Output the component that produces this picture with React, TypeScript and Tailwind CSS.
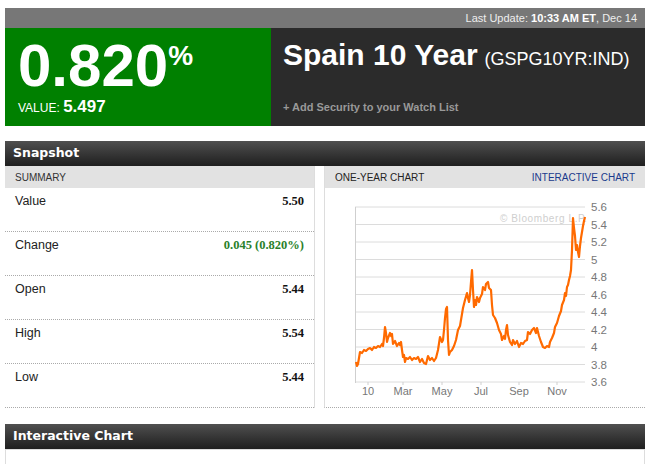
import React from "react";

const rows = [
  { label: "Value", value: "5.50", green: false },
  { label: "Change", value: "0.045 (0.820%)", green: true },
  { label: "Open", value: "5.44", green: false },
  { label: "High", value: "5.54", green: false },
  { label: "Low", value: "5.44", green: false },
];

// page-coordinate points traced from the chart
const pts: [number, number][] = [
  [356, 362], [357, 366], [358, 364], [359, 358], [360, 352], [362, 353], [364, 350], [366, 351],
  [368, 349], [370, 348], [372, 350], [374, 347], [376, 348], [378, 346], [380, 347], [382, 344],
  [383, 346], [384, 338], [385, 327], [386, 333], [387, 342], [388, 338], [390, 333], [391, 336],
  [392, 334], [393, 344], [395, 341], [397, 346], [399, 343], [400, 345], [401, 342], [402, 350],
  [403, 357], [404, 355], [405, 362], [406, 358], [408, 359], [410, 357], [412, 360], [414, 358],
  [416, 359], [418, 357], [420, 362], [422, 359], [424, 363], [426, 364], [427, 360], [428, 356],
  [430, 360], [432, 358], [434, 361], [436, 358], [438, 350], [440, 337], [442, 342], [443, 340],
  [444, 330], [445, 318], [446, 309], [447, 307], [448, 340], [449, 355], [450, 352], [452, 350],
  [454, 346], [456, 340], [458, 330], [460, 326], [462, 314], [463, 308], [465, 300], [467, 293],
  [468, 298], [469, 302], [470, 295], [471, 282], [472, 270], [473, 290], [474, 307], [475, 300],
  [476, 305], [477, 297], [479, 302], [480, 298], [482, 294], [483, 287], [485, 290], [486, 284],
  [488, 282], [489, 288], [491, 290], [492, 305], [493, 315], [495, 318], [497, 323], [499, 330],
  [501, 334], [502, 340], [504, 336], [505, 339], [506, 330], [507, 325], [508, 335], [510, 342],
  [512, 345], [513, 340], [515, 344], [517, 341], [519, 347], [521, 343], [523, 344], [525, 341],
  [527, 340], [528, 332], [530, 334], [532, 330], [534, 328], [536, 333], [537, 328], [539, 336],
  [541, 342], [543, 347], [545, 348], [547, 346], [549, 347], [550, 342], [552, 338], [554, 333],
  [555, 327], [557, 323], [559, 316], [561, 311], [562, 305], [564, 300], [565, 293], [566, 296],
  [567, 287], [568, 285], [569, 280], [570, 276], [571, 270], [572, 250], [573, 218], [574, 228],
  [575, 236], [576, 250], [577, 245], [578, 252], [579, 257], [580, 246], [581, 238], [582, 232],
  [583, 226], [584, 221], [585, 217],
];

const yLabels = ["5.6", "5.4", "5.2", "5", "4.8", "4.6", "4.4", "4.2", "4", "3.8", "3.6"];
const xLabels: [string, number][] = [
  ["10", 368],
  ["Mar", 403],
  ["May", 442],
  ["Jul", 481],
  ["Sep", 519],
  ["Nov", 557],
];

function YearChart() {
  return (
    <svg width="320" height="218" viewBox="325 188 320 218" className="block">
      {yLabels.map((l, i) => (
        <g key={l}>
          <line x1={355} x2={585} y1={207 + i * 17.5} y2={207 + i * 17.5} stroke="#dcdcdc" strokeWidth="1" />
          <text x={591} y={211 + i * 17.5} fontSize="11.5" fill="#777" fontFamily="'Liberation Sans', Arial, sans-serif">
            {l}
          </text>
        </g>
      ))}
      <line x1={355.5} x2={355.5} y1={207} y2={383} stroke="#cfcfcf" />
      {xLabels.map(([l, x]) => (
        <g key={l}>
          <line x1={x} x2={x} y1={382} y2={385} stroke="#cfcfcf" />
          <text x={x} y={395} fontSize="11" fill="#777" textAnchor="middle" fontFamily="'Liberation Sans', Arial, sans-serif">
            {l}
          </text>
        </g>
      ))}
      <text x={500} y={222} fontSize="10" fill="#cfcfcf" letterSpacing="0.6" fontFamily="'Liberation Sans', Arial, sans-serif">
        © Bloomberg L.P.
      </text>
      <polyline
        points={pts.map(([x, y]) => `${x},${y}`).join(" ")}
        fill="none"
        stroke="#ff6a00"
        strokeWidth="2.2"
        strokeLinejoin="round"
      />
    </svg>
  );
}

function SectionHeader({ title }: { title: string }) {
  return (
    <div className="flex h-[25px] items-center bg-gradient-to-b from-[#505050] to-[#1f1f1f] pl-[8px] text-[12.5px] font-bold text-white [font-family:'DejaVu_Sans',Verdana,sans-serif]">
      {title}
    </div>
  );
}

export default function App() {
  return (
    <div className="h-[464px] w-[655px] overflow-hidden bg-white pl-[5px] pt-[8px] [font-family:'Liberation_Sans',Arial,sans-serif]">
      <div className="w-[640px]">
        <div className="flex h-[20px] items-center justify-end bg-[#777] pr-[8px] text-[11px] text-[#eee]">
          Last Update:&nbsp;<b className="text-white">10:33 AM ET</b>, Dec 14
        </div>
        <div className="flex h-[98px]">
          <div className="w-[266px] bg-[#008000] pl-[13px] text-white">
            <div className="flex items-start pt-[10px]">
              <span className="text-[60px] font-bold leading-[56px]">0.820</span>
              <span className="mt-[2px] text-[28px] font-bold leading-[32px]">%</span>
            </div>
            <div className="mt-[3px] flex items-baseline leading-[20px]">
              <span className="text-[12px]">VALUE:&nbsp;</span>
              <span className="text-[17px] font-bold">5.497</span>
            </div>
          </div>
          <div className="flex-1 bg-[#2b2b2b] pl-[12px] text-white">
            <div className="flex items-baseline pt-[8px]">
              <span className="text-[30px] font-bold leading-[38px]">Spain 10 Year</span>
              <span className="ml-[7px] text-[18px]">(GSPG10YR:IND)</span>
            </div>
            <div className="mt-[25px] text-[11px] font-bold text-[#999]">+ Add Security to your Watch List</div>
          </div>
        </div>

        <div className="mt-[15px]">
          <SectionHeader title="Snapshot" />
          <div className="flex">
            <div className="w-[311px] border-r border-[#ddd]">
              <div className="flex h-[22px] items-center bg-[#e2e2e2] pl-[10px] text-[10px] text-[#333]">SUMMARY</div>
              {rows.map((r) => (
                <div
                  key={r.label}
                  className="flex h-[44px] justify-between border-b border-dotted border-[#aaa] pl-[10px] pr-[10px] pt-[4px]"
                >
                  <span className="text-[12.5px] text-[#222]">{r.label}</span>
                  <span
                    className={`text-[12.5px] font-bold [font-family:'Liberation_Serif','Times_New_Roman',serif] ${
                      r.green ? "text-[#2a7f2a]" : "text-[#111]"
                    }`}
                  >
                    {r.value}
                  </span>
                </div>
              ))}
            </div>
            <div className="ml-[9px] flex-1 border-b border-l border-dotted border-[#aaa] [border-left-color:#ddd] [border-left-style:solid]">
              <div className="flex h-[22px] items-center justify-between bg-[#e2e2e2] px-[10px] text-[10px]">
                <span className="text-[#222]">ONE-YEAR CHART</span>
                <span className="text-[#1a3a8c]">INTERACTIVE CHART</span>
              </div>
              <YearChart />
            </div>
          </div>
        </div>

        <div className="mt-[16px]">
          <SectionHeader title="Interactive Chart" />
          <div className="h-[40px] border border-[#ddd]" />
        </div>
      </div>
    </div>
  );
}
